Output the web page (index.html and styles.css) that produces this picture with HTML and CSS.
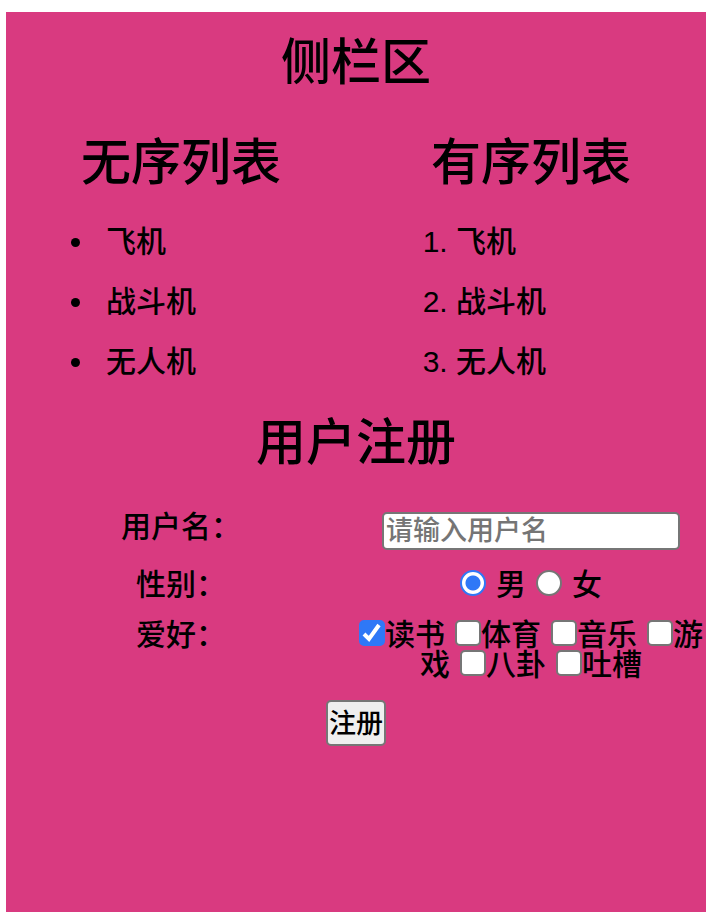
FILE: index.html
```html
<!DOCTYPE html>
<html lang="zh-CN">
<head>
<meta charset="utf-8">
<title>侧栏区</title>
<link rel="stylesheet" href="styles.css">
</head>
<body>
<aside class="sidebar">
  <h1 class="title">侧栏区</h1>
  <div class="lists">
    <section>
      <h2 class="title">无序列表</h2>
      <ul class="list bullets">
        <li>飞机</li>
        <li>战斗机</li>
        <li>无人机</li>
      </ul>
    </section>
    <section>
      <h2 class="title">有序列表</h2>
      <ol class="list">
        <li>飞机</li>
        <li>战斗机</li>
        <li>无人机</li>
      </ol>
    </section>
  </div>
  <h2 class="title">用户注册</h2>
  <form class="form">
    <div class="row">
      <label class="name" for="username">用户名：</label>
      <div class="field"><input class="text" type="text" id="username" placeholder="请输入用户名"></div>
    </div>
    <div class="row" role="radiogroup" aria-labelledby="gender">
      <span class="name" id="gender">性别：</span>
      <div class="field options">
        <label class="option"><input class="box radio" type="radio" name="gender" checked>男</label>
        <label class="option"><input class="box radio" type="radio" name="gender">女</label>
      </div>
    </div>
    <div class="row" role="group" aria-labelledby="hobby">
      <span class="name" id="hobby">爱好：</span>
      <div class="field"><label><input class="box check" type="checkbox" checked>读书</label><label><input class="box check" type="checkbox">体育</label><label><input class="box check" type="checkbox">音乐</label><label><input class="box check" type="checkbox">游戏</label><label><input class="box check" type="checkbox">八卦</label><label><input class="box check" type="checkbox">吐槽</label></div>
    </div>
    <button class="submit" type="button">注册</button>
  </form>
</aside>
</body>
</html>
```
FILE: styles.css
```css
* {
  box-sizing: border-box;
}

body {
  margin: 12px 14px 12px 6px;
  background: #fff;
  color: #000;
  font-family: "Liberation Sans", "Noto Sans CJK SC", sans-serif;
  font-size: 30px;
  font-weight: 500;
  line-height: 30px;
}

.sidebar {
  min-height: calc(100vh - 24px);
  background: #d93a80;
}

.title {
  margin: 0;
  padding-top: 2px;
  font-size: 50px;
  font-weight: 500;
  line-height: 98px;
  text-align: center;
}

.lists,
.row {
  display: grid;
  grid-template-columns: 1fr 1fr;
}

.list {
  margin: 0;
  padding-left: 100px;
  line-height: 60px;
}

.bullets {
  padding-left: 90px;
}

.bullets li {
  padding-left: 10px;
}

.form {
  display: flex;
  flex-direction: column;
  gap: 20px;
  padding-top: 20px;
}

.name,
.field {
  text-align: center;
}

.text {
  display: block;
  width: 298px;
  max-width: 100%;
  height: 38px;
  margin: 0 auto;
  padding: 2px;
  border: 2px solid #767676;
  border-radius: 5px;
  background: #fff;
  font-family: inherit;
  font-size: 27px;
  font-weight: 500;
}

.text::placeholder {
  color: #757575;
}

.options {
  display: flex;
  justify-content: center;
  gap: 10px;
}

.option {
  display: flex;
  gap: 10px;
}

.box {
  appearance: none;
  width: 26px;
  height: 26px;
  margin: 0;
  border: 2px solid #767676;
  background: #fff;
}

.radio {
  border-radius: 50%;
}

.radio:checked {
  border-color: #2f78f7;
  background: radial-gradient(circle, #2f78f7 7px, #fff 8px);
}

.check {
  border-radius: 5px;
  vertical-align: -1px;
}

label + label .check {
  margin-left: 10px;
}

.check:checked {
  border-color: #2f78f7;
  background: #2f78f7 url("data:image/svg+xml,%3Csvg xmlns='http://www.w3.org/2000/svg' viewBox='0 0 22 22'%3E%3Cpath d='M3 12 L8 17 L18 3' fill='none' stroke='white' stroke-width='4'/%3E%3C/svg%3E") center / 22px 22px no-repeat;
}

.submit {
  align-self: center;
  height: 46px;
  padding: 0 1px 4px;
  border: 2px solid #767676;
  border-radius: 5px;
  background: #efefef;
  color: #000;
  font-family: inherit;
  font-size: 27px;
  font-weight: 500;
}
```
